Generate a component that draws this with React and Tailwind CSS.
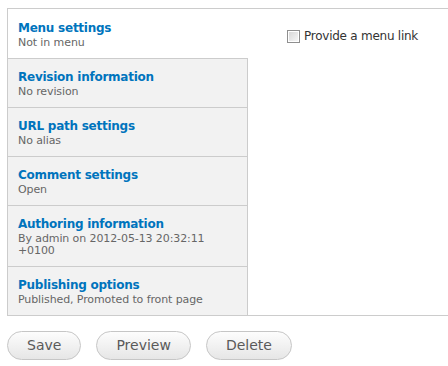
import React from "react";

const tabs = [
  { id: "menu", title: "Menu settings", summary: "Not in menu" },
  { id: "revision", title: "Revision information", summary: "No revision" },
  { id: "path", title: "URL path settings", summary: "No alias" },
  { id: "comment", title: "Comment settings", summary: "Open" },
  {
    id: "author",
    title: "Authoring information",
    summary: "By admin on 2012-05-13 20:32:11 +0100",
  },
  {
    id: "options",
    title: "Publishing options",
    summary: "Published, Promoted to front page",
  },
];

const font = { fontFamily: '"DejaVu Sans", Verdana, sans-serif' };

const Tab = ({ tab, selected, first }) => (
  <div
    className={`pl-[10px] pr-[10px] pb-[9px] ${
      first ? "pt-[11px]" : "pt-[10px] border-t border-[#cccccc]"
    } ${
      selected
        ? "bg-white w-[241px]"
        : "bg-[#f2f2f2] w-[240px] border-r border-r-[#cccccc]"
    }`}
  >
    <div className="text-[12px] leading-[17px] font-bold tracking-[-0.25px] text-[#0074bd]">
      {tab.title}
    </div>
    <div className="text-[11px] leading-[12px] tracking-[-0.1px] text-[#666666]">
      {tab.summary}
    </div>
  </div>
);

const Button = ({ children }) => (
  <button className="h-[29px] px-[19px] rounded-full border border-[#c6c6c6] bg-gradient-to-b from-[#fdfdfd] to-[#e6e6e6] text-[14px] text-[#5a5a5a]">
    {children}
  </button>
);

export default function App() {
  return (
    <div className="w-[448px] h-[366px] overflow-hidden bg-white" style={font}>
      <div className="pt-[8px] pl-[7px]">
        {/* Vertical tabs box */}
        <div className="flex w-[460px] border border-[#cccccc]">
          <div className="flex flex-col">
            {tabs.map((tab, i) => (
              <Tab key={tab.id} tab={tab} selected={i === 0} first={i === 0} />
            ))}
          </div>

          {/* Pane */}
          <div className="flex-1 pl-[38px] pt-[18px]">
            <label className="flex items-center gap-[4px] text-[12px] tracking-[-0.25px] text-[#333333]">
              <span className="w-[13px] h-[13px] border border-[#8f8f8f] bg-white p-[1px]">
                <span className="block w-full h-full bg-gradient-to-br from-[#d8d8d8] to-[#f6f6f6]" />
              </span>
              <span>Provide a menu link</span>
            </label>
          </div>
        </div>

        {/* Actions */}
        <div className="flex gap-[15px] mt-[15px]">
          <Button>Save</Button>
          <Button>Preview</Button>
          <Button>Delete</Button>
        </div>
      </div>
    </div>
  );
}
